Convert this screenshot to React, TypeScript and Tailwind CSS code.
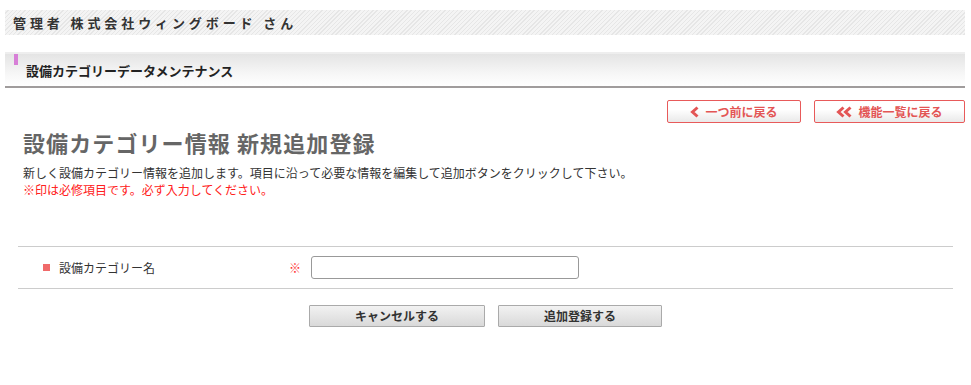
const font = {
  fontFamily: '"Noto Sans CJK JP", "Noto Sans", sans-serif',
};

function ChevronLeft({ double = false }: { double?: boolean }) {
  return (
    <svg
      width={double ? 17 : 10}
      height="12"
      viewBox={double ? "0 0 17 12" : "0 0 10 12"}
      className="shrink-0"
    >
      <path
        d="M7.5 1.5 L2.5 6 L7.5 10.5"
        fill="none"
        stroke="currentColor"
        strokeWidth="3"
      />
      {double && (
        <path
          d="M14.5 1.5 L9.5 6 L14.5 10.5"
          fill="none"
          stroke="currentColor"
          strokeWidth="3"
        />
      )}
    </svg>
  );
}

function BackButton({
  label,
  double,
  width,
}: {
  label: string;
  double?: boolean;
  width: string;
}) {
  return (
    <button
      className={`${width} h-[23px] flex items-center justify-center gap-[5px] rounded-[2px] border border-[#e85a5a] bg-[linear-gradient(#ffffff,#ffffff_40%,#e9e9e9)] text-[12px] font-bold text-[#e35555]`}
    >
      <ChevronLeft double={double} />
      {label}
    </button>
  );
}

export default function App() {
  return (
    <div className="w-[971px] min-h-[385px] bg-white pt-[10px]" style={font}>
      {/* user bar */}
      <div className="ml-[5px] mr-[6px] h-[25px] flex items-center pl-[8px] bg-[repeating-linear-gradient(135deg,#f4f4f4_0px,#f4f4f4_2px,#e6e6e6_2px,#e6e6e6_3px)]">
        <span className="text-[13px] font-bold tracking-[3.9px] text-[#333]">
          管理者 株式会社ウィングボード さん
        </span>
      </div>

      {/* page title bar */}
      <div className="mt-[17px] ml-[5px] mr-[6px] border-t-2 border-[#eeeeee] border-b-2 border-b-[#a09c9c]">
        <div className="relative h-[32px] flex items-center pl-[21px] bg-[linear-gradient(#e4e4e4,#f6f6f6_60%,#ffffff)]">
          <span className="absolute left-[9px] top-0 w-[4px] h-[11px] bg-[#d77fd7]" />
          <span className="text-[13px] font-bold text-[#222] mt-[2px]">
            設備カテゴリーデータメンテナンス
          </span>
        </div>
      </div>

      {/* nav buttons */}
      <div className="mt-[12px] mr-[6px] flex justify-end gap-[13px]">
        <BackButton label="一つ前に戻る" width="w-[134px]" />
        <BackButton label="機能一覧に戻る" double width="w-[151px]" />
      </div>

      {/* heading */}
      <div className="pl-[23px]">
        <h1 className="mt-[5px] text-[22px] leading-[28px] font-bold tracking-[1.1px] text-[#666]">
          設備カテゴリー情報 新規追加登録
        </h1>
        <p className="mt-[8px] text-[12px] leading-[17px] text-[#333]">
          新しく設備カテゴリー情報を追加します。項目に沿って必要な情報を編集して追加ボタンをクリックして下さい。
        </p>
        <p className="text-[12px] leading-[17px] text-[#ff2020]">
          ※印は必修項目です。必ず入力してください。
        </p>
      </div>

      {/* form */}
      <div className="mt-[48px] mx-[18px] border-t border-b border-[#cccccc] h-[43px] flex items-center">
        <span className="ml-[25px] w-[7px] h-[7px] bg-[#f06a6a]" />
        <span className="ml-[9px] w-[230px] text-[12px] text-[#333]">
          設備カテゴリー名
        </span>
        <span className="w-[22px] text-[12px] text-[#ff3030]">※</span>
        <input
          type="text"
          className="w-[268px] h-[23px] rounded-[3px] border border-[#999] bg-white outline-none"
        />
      </div>

      {/* actions */}
      <div className="mt-[16px] flex justify-center gap-[13px]">
        <button className="w-[176px] h-[22px] border border-[#aaaaaa] rounded-[1px] bg-[linear-gradient(#f2f2f2,#d9d9d9)] text-[12px] font-bold text-[#333]">
          キャンセルする
        </button>
        <button className="w-[164px] h-[22px] border border-[#aaaaaa] rounded-[1px] bg-[linear-gradient(#f2f2f2,#d9d9d9)] text-[12px] font-bold text-[#333]">
          追加登録する
        </button>
      </div>
    </div>
  );
}
